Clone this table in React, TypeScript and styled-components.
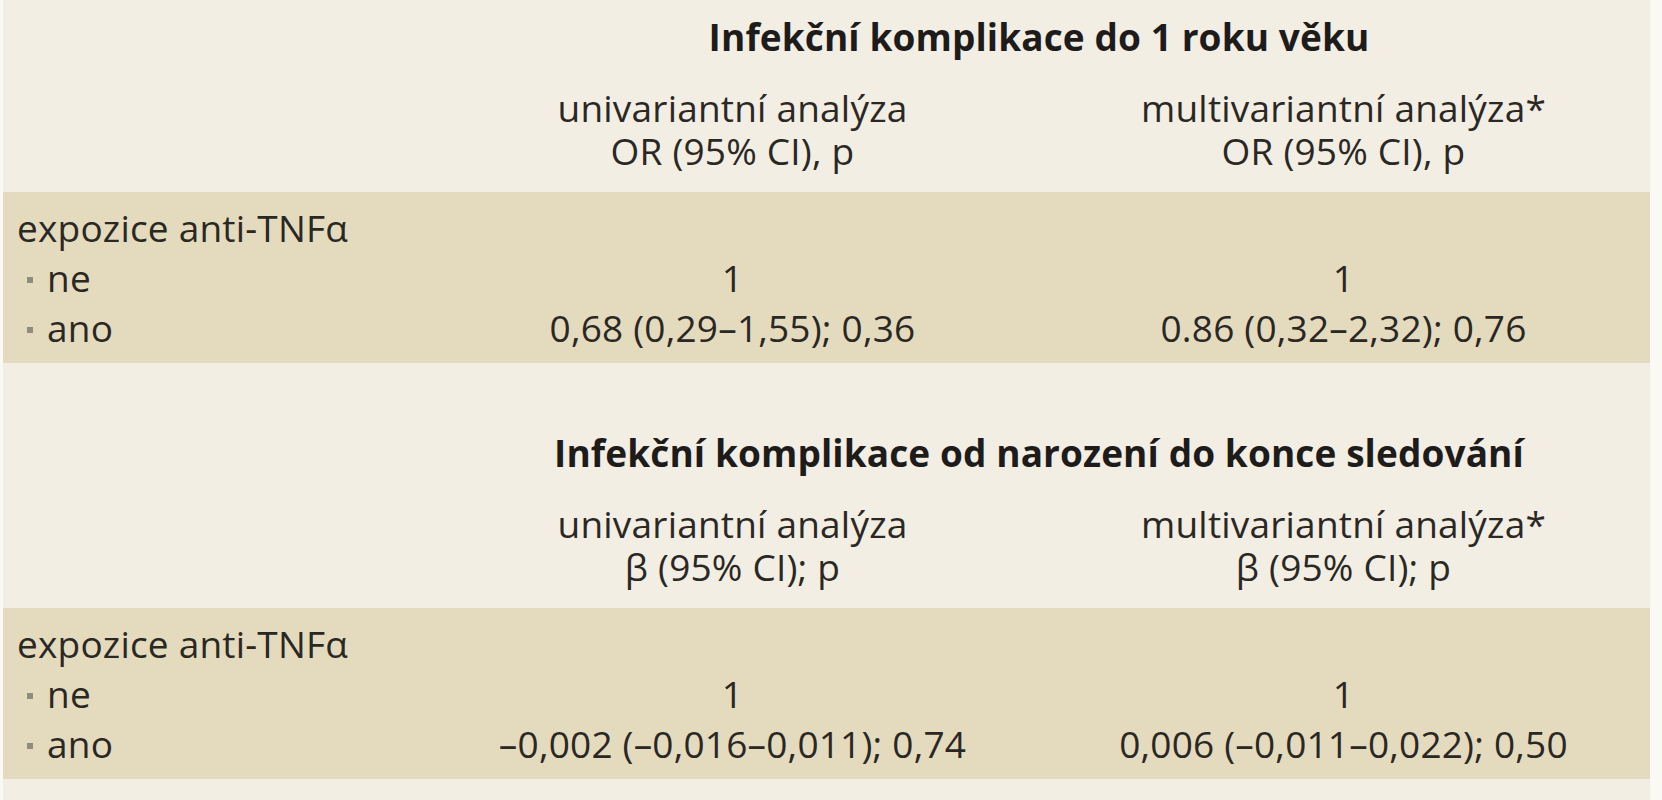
import React from "react";
import styled, { createGlobalStyle } from "styled-components";

const GlobalStyle = createGlobalStyle`
  html, body {
    margin: 0;
    background: #fbf9f4;
  }
  body {
    font-family: "Open Sans", "Noto Sans", sans-serif;
    color: #2b2824;
  }
`;

const Panel = styled.div`
  margin-left: 3px;
  width: 1647px;
  min-height: 800px;
  background: #f3eee4;
  display: flex;
  flex-direction: column;
  gap: 53px;
`;

const Block = styled.section`
  display: grid;
  grid-template-columns: 425px 609px 613px;
`;

const Title = styled.div`
  grid-column: 2 / span 2;
  padding-top: 12px;
  text-align: center;
  font-weight: 700;
  font-size: 37px;
  line-height: 50px;
  font-stretch: 90%;
  letter-spacing: 0.1px;
  color: #1e1c1b;
  white-space: nowrap;
`;

const HeadCell = styled.div<{ $col: number }>`
  grid-column: ${(p) => p.$col};
  padding: 24px 0 20px;
  display: flex;
  flex-direction: column;
  align-items: center;
`;

const HeadLine = styled.div`
  height: 43px;
  font-size: 37px;
  line-height: 43px;
  letter-spacing: 0.2px;
  white-space: nowrap;
  overflow: visible;
`;

const Band = styled.div`
  grid-column: 1 / -1;
  display: grid;
  grid-template-columns: 425px 609px 613px;
  background: #e4dbbf;
  padding: 11px 0 10px;
`;

const Col = styled.div<{ $center?: boolean }>`
  display: flex;
  flex-direction: column;
  align-items: ${(p) => (p.$center ? "center" : "flex-start")};
  padding-left: ${(p) => (p.$center ? "0" : "14px")};
`;

const Line = styled.div`
  font-size: 37px;
  line-height: 50px;
  height: 50px;
  letter-spacing: 0.2px;
  white-space: nowrap;
`;

const Item = styled(Line)`
  display: flex;
  align-items: center;
  padding-left: 10px;
  &::before {
    content: "";
    width: 6px;
    height: 6px;
    margin: 4px 14px 0 0;
    background: #8f8b80;
  }
`;

type Section = {
  title: string;
  stat: string;
  uni: [string, string];
  multi: [string, string];
};

const sections: Section[] = [
  {
    title: "Infekční komplikace do 1 roku věku",
    stat: "OR (95% CI), p",
    uni: ["1", "0,68 (0,29–1,55); 0,36"],
    multi: ["1", "0.86 (0,32–2,32); 0,76"],
  },
  {
    title: "Infekční komplikace od narození do konce sledování",
    stat: "β (95% CI); p",
    uni: ["1", "–0,002 (–0,016–0,011); 0,74"],
    multi: ["1", "0,006 (–0,011–0,022); 0,50"],
  },
];

export default function App() {
  return (
    <>
      <GlobalStyle />
      <Panel>
        {sections.map((s) => (
          <Block key={s.title}>
            <Title>{s.title}</Title>
            <HeadCell $col={2}>
              <HeadLine>univariantní analýza</HeadLine>
              <HeadLine>{s.stat}</HeadLine>
            </HeadCell>
            <HeadCell $col={3}>
              <HeadLine>multivariantní analýza*</HeadLine>
              <HeadLine>{s.stat}</HeadLine>
            </HeadCell>
            <Band>
              <Col>
                <Line>expozice anti-TNFα</Line>
                <Item>ne</Item>
                <Item>ano</Item>
              </Col>
              <Col $center>
                <Line />
                <Line>{s.uni[0]}</Line>
                <Line>{s.uni[1]}</Line>
              </Col>
              <Col $center>
                <Line />
                <Line>{s.multi[0]}</Line>
                <Line>{s.multi[1]}</Line>
              </Col>
            </Band>
          </Block>
        ))}
      </Panel>
    </>
  );
}
